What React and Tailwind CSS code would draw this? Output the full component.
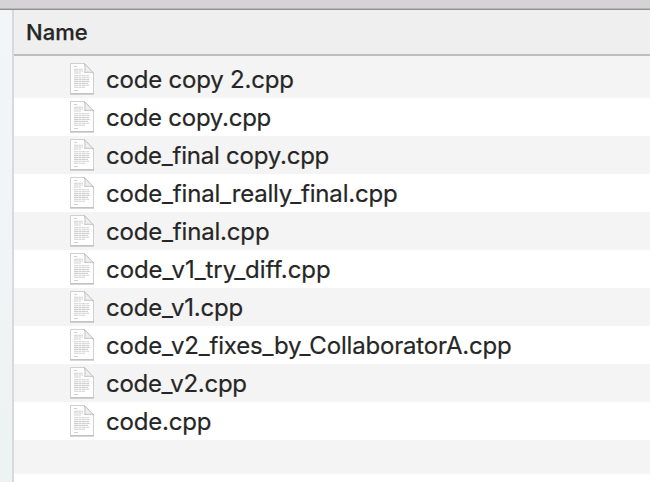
const files = [
  ["code copy 2.cpp", "tracking-[-0.2px]"],
  ["code copy.cpp", "tracking-[-0.25px]"],
  ["code_final copy.cpp", "tracking-[-0.23px]"],
  ["code_final_really_final.cpp", "tracking-[-0.18px]"],
  ["code_final.cpp", "tracking-[-0.18px]"],
  ["code_v1_try_diff.cpp", "tracking-[-0.06px]"],
  ["code_v1.cpp", "tracking-[-0.18px]"],
  ["code_v2_fixes_by_CollaboratorA.cpp", "tracking-[-0.18px]"],
  ["code_v2.cpp", "tracking-[-0.3px]"],
  ["code.cpp", "tracking-[-0.2px]"],
];

function FileIcon() {
  return (
    <svg className="h-[34px] w-7 shrink-0" viewBox="0 0 28 34" fill="none">
      <path d="M2 2.500h15L26 12v20.500H2z" fill="#999" opacity=".2" />
      <path d="M2.500 1.500h13.800l9.200 9.500v20.500h-23z" fill="#fefefe" stroke="#d0d0d0" />
      <path d="M2 32h24" stroke="#b0b0b0" strokeWidth=".9" />
      <path d="M16.300 1.500c1 3 .9 6 .3 9 3.400-.5 6.300-.4 8.900.5z" fill="#f0f0f0" stroke="#bcbcbc" strokeWidth=".9" />
      <path
        d="M6 4.500h3M6 7.200h9M6 9h9M6 11h7M6 13.800h15M6 15.700h16M6 17.600h15M6 19.500h16M6 21.400h14M6 23.300h15M6 25.200h11M6 28.500h4"
        stroke="#d0d0d0" strokeWidth="1.100" strokeDasharray="4 .4 3 .4"
      />
    </svg>
  );
}

export default function App() {
  return (
    <div className="flex h-[482px] w-[650px] flex-col overflow-hidden bg-white font-[Inter,sans-serif] text-[#262626]">
      <div className="h-[10px] shrink-0 border-b border-[#8f8f8f] bg-[#d5d3d5] pt-2">
        <div className="h-px bg-[#b9b7b9]" />
      </div>
      <div className="flex min-h-0 flex-1">
        <div className="w-[14px] shrink-0 border-r-2 border-[#d8d9dc] bg-linear-to-b from-[#f3f6f9] to-[#edf2f2]" />
        <div className="min-w-0 flex-1">
          <div className="flex h-[46px] items-center border-b-2 border-[#bdbdbd] bg-[#efefef] pl-3">
            <span className="text-[22px] font-medium [-webkit-text-stroke:0.25px_#262626]">Name</span>
          </div>
          <div className="h-1 bg-[#f4f4f4]" />
          {files.map(([name, tracking], i) => (
            <div key={name} className={`flex h-[38px] items-center pl-[54px] ${i % 2 ? "bg-white" : "bg-[#f4f4f4]"}`}>
              <FileIcon />
              <span className={`ml-[10px] whitespace-nowrap pt-0.5 text-[24px] leading-none [-webkit-text-stroke:0.2px_#262626] ${tracking}`}>{name}</span>
            </div>
          ))}
          <div className="h-[34px] bg-[#f4f4f4]" />
        </div>
      </div>
    </div>
  );
}
